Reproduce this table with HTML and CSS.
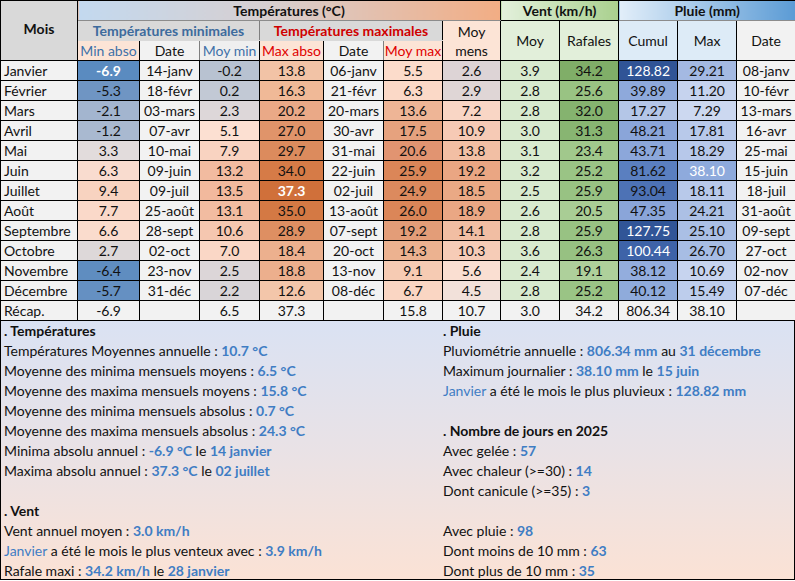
FILE: index.html
```html
<!DOCTYPE html>
<html lang="fr">
<head>
<meta charset="utf-8">
<title>Récapitulatif 2025</title>
<link rel="stylesheet" href="styles.css">
</head>
<body>
<div class="sheet">
<table class="grid">
<colgroup>
<col class="c-mois"><col class="c-minabs"><col class="c-d"><col class="c-moymin"><col class="c-maxabs"><col class="c-d"><col class="c-moymax"><col class="c-mens"><col class="c-v"><col class="c-v"><col class="c-v"><col class="c-v"><col class="c-v">
</colgroup>
<thead>
<tr>
<th rowspan="3" class="mois-h">Mois</th>
<th colspan="7" class="h-temp">Températures (°C)</th>
<th colspan="2" class="h-vent">Vent (km/h)</th>
<th colspan="3" class="h-pluie">Pluie (mm)</th>
</tr>
<tr>
<th colspan="3" class="h-min">Températures minimales</th>
<th colspan="3" class="h-max">Températures maximales</th>
<th rowspan="2" class="s-mens">Moy<br>mens</th>
<th rowspan="2" class="s-vent">Moy</th>
<th rowspan="2" class="s-vent">Rafales</th>
<th rowspan="2" class="s-pluie">Cumul</th>
<th rowspan="2" class="s-pluie">Max</th>
<th rowspan="2" class="s-date">Date</th>
</tr>
<tr>
<th class="s-min peach">Min abso</th>
<th class="s-date">Date</th>
<th class="s-min grey">Moy min</th>
<th class="s-max peach">Max abso</th>
<th class="s-date">Date</th>
<th class="s-max peach">Moy max</th>
</tr>
</thead>
<tbody>
<tr><td class="m">Janvier</td><td class="hi" style="background:#5a8bc0">-6.9</td><td class="d">14-janv</td><td style="background:#b8c2d1">-0.2</td><td style="background:#f2c3a6">13.8</td><td class="d">06-janv</td><td style="background:#fcdccb">5.5</td><td style="background:#ddd4d6">2.6</td><td style="background:#d8eacf">3.9</td><td style="background:#80ae68">34.2</td><td class="w" style="background:#305496">128.82</td><td style="background:#a4b9e2">29.21</td><td class="d">08-janv</td></tr>
<tr><td class="m">Février</td><td style="background:#6f95c3">-5.3</td><td class="d">18-févr</td><td style="background:#c2c9d5">0.2</td><td style="background:#f0b997">16.3</td><td class="d">21-févr</td><td style="background:#fbd9c7">6.3</td><td style="background:#dfd6d6">2.9</td><td style="background:#d8eacf">2.8</td><td style="background:#99c383">25.6</td><td style="background:#8ea9db">39.89</td><td style="background:#c6d3ee">11.20</td><td class="d">10-févr</td></tr>
<tr><td class="m">Mars</td><td style="background:#a3b5cf">-2.1</td><td class="d">03-mars</td><td style="background:#ddd7d9">2.3</td><td style="background:#eaa987">20.2</td><td class="d">20-mars</td><td style="background:#eeb596">13.6</td><td style="background:#f9d6c5">7.2</td><td style="background:#d8eacf">2.8</td><td style="background:#85b36f">32.0</td><td style="background:#b4c6e7">17.27</td><td style="background:#ccd8f0">7.29</td><td class="d">13-mars</td></tr>
<tr><td class="m">Avril</td><td style="background:#a9b9d0">-1.2</td><td class="d">07-avr</td><td style="background:#fce0d2">5.1</td><td style="background:#e0946a">27.0</td><td class="d">30-avr</td><td style="background:#e6a27e">17.5</td><td style="background:#f6cab5">10.9</td><td style="background:#d8eacf">3.0</td><td style="background:#88b572">31.3</td><td style="background:#8aa5d9">48.21</td><td style="background:#b8c9ea">17.81</td><td class="d">16-avr</td></tr>
<tr><td class="m">Mai</td><td style="background:#e2dcdc">3.3</td><td class="d">10-mai</td><td style="background:#f9d3c1">7.9</td><td style="background:#dc8b5d">29.7</td><td class="d">31-mai</td><td style="background:#e19471">20.6</td><td style="background:#f2bfa4">13.8</td><td style="background:#d8eacf">3.1</td><td style="background:#a1c88c">23.4</td><td style="background:#8ca7da">43.71</td><td style="background:#b7c8ea">18.29</td><td class="d">25-mai</td></tr>
<tr><td class="m">Juin</td><td style="background:#f9dccf">6.3</td><td class="d">09-juin</td><td style="background:#f2bba0">13.2</td><td style="background:#d67b47">34.0</td><td class="d">22-juin</td><td style="background:#db8658">25.9</td><td style="background:#eaa683">19.2</td><td style="background:#d8eacf">3.2</td><td style="background:#9ac485">25.2</td><td style="background:#5a7fc0">81.62</td><td class="w" style="background:#8eaadc">38.10</td><td class="d">15-juin</td></tr>
<tr><td class="m">Juillet</td><td style="background:#f8d3c0">9.4</td><td class="d">09-juil</td><td style="background:#f2b99d">13.5</td><td class="hi" style="background:#d0703a">37.3</td><td class="d">02-juil</td><td style="background:#dc8a5e">24.9</td><td style="background:#eaa985">18.5</td><td style="background:#d8eacf">2.5</td><td style="background:#98c283">25.9</td><td style="background:#4d72b5">93.04</td><td style="background:#b8c9ea">18.11</td><td class="d">18-juil</td></tr>
<tr><td class="m">Août</td><td style="background:#fad9c9">7.7</td><td class="d">25-août</td><td style="background:#f2bca1">13.1</td><td style="background:#d47944">35.0</td><td class="d">13-août</td><td style="background:#db8658">26.0</td><td style="background:#eaa784">18.9</td><td style="background:#d8eacf">2.6</td><td style="background:#a9cd95">20.5</td><td style="background:#8aa5d9">47.35</td><td style="background:#acc0e5">24.21</td><td class="d">31-août</td></tr>
<tr><td class="m">Septembre</td><td style="background:#fadccd">6.6</td><td class="d">28-sept</td><td style="background:#f5c7b0">10.6</td><td style="background:#de8f62">28.9</td><td class="d">07-sept</td><td style="background:#e39d78">19.2</td><td style="background:#f1bea3">14.1</td><td style="background:#d8eacf">2.8</td><td style="background:#98c283">25.9</td><td class="w" style="background:#315597">127.75</td><td style="background:#aabfe5">25.10</td><td class="d">09-sept</td></tr>
<tr><td class="m">Octobre</td><td style="background:#ddd8d9">2.7</td><td class="d">02-oct</td><td style="background:#fad7c6">7.0</td><td style="background:#ecb08e">18.4</td><td class="d">20-oct</td><td style="background:#ecb290">14.3</td><td style="background:#f6ccb7">10.3</td><td style="background:#d8eacf">3.6</td><td style="background:#97c182">26.3</td><td class="w" style="background:#3e63a8">100.44</td><td style="background:#a7bde4">26.70</td><td class="d">27-oct</td></tr>
<tr><td class="m">Novembre</td><td style="background:#5f8dc0">-6.4</td><td class="d">23-nov</td><td style="background:#dcd6d8">2.5</td><td style="background:#ecaf8d">18.8</td><td class="d">13-nov</td><td style="background:#f6cbb3">9.1</td><td style="background:#fadfd2">5.6</td><td style="background:#d8eacf">2.4</td><td style="background:#aed09b">19.1</td><td style="background:#93addd">38.12</td><td style="background:#c7d4ef">10.69</td><td class="d">02-nov</td></tr>
<tr><td class="m">Décembre</td><td style="background:#6590c2">-5.7</td><td class="d">31-déc</td><td style="background:#d9d5d8">2.2</td><td style="background:#f3c6aa">12.6</td><td class="d">08-déc</td><td style="background:#fad6c3">6.7</td><td style="background:#f2e1da">4.5</td><td style="background:#d8eacf">2.8</td><td style="background:#9ac485">25.2</td><td style="background:#8fabdb">40.12</td><td style="background:#bdcdec">15.49</td><td class="d">07-déc</td></tr>
<tr class="recap"><td class="m">Récap.</td><td>-6.9</td><td></td><td>6.5</td><td>37.3</td><td></td><td>15.8</td><td>10.7</td><td>3.0</td><td>34.2</td><td>806.34</td><td>38.10</td><td></td></tr>
</tbody>
</table>
<div class="summary">
<div class="col left">
<div class="line title">. Températures</div>
<div class="line">Températures Moyennes annuelle : <b>10.7 °C</b></div>
<div class="line">Moyenne des minima mensuels moyens : <b>6.5 °C</b></div>
<div class="line">Moyenne des maxima mensuels moyens : <b>15.8 °C</b></div>
<div class="line">Moyenne des minima mensuels absolus : <b>0.7 °C</b></div>
<div class="line">Moyenne des maxima mensuels absolus : <b>24.3 °C</b></div>
<div class="line">Minima absolu annuel : <b>-6.9 °C</b> le <b>14 janvier</b></div>
<div class="line">Maxima absolu annuel : <b>37.3 °C</b> le <b>02 juillet</b></div>
<div class="line"></div>
<div class="line title">. Vent</div>
<div class="line">Vent annuel moyen : <b>3.0 km/h</b></div>
<div class="line"><span class="hl">Janvier</span> a été le mois le plus venteux avec : <b>3.9 km/h</b></div>
<div class="line">Rafale maxi : <b>34.2 km/h</b> le <b>28 janvier</b></div>
</div>
<div class="col right">
<div class="line title">. Pluie</div>
<div class="line">Pluviométrie annuelle : <b>806.34 mm</b> au <b>31 décembre</b></div>
<div class="line">Maximum journalier : <b>38.10 mm</b> le <b>15 juin</b></div>
<div class="line"><span class="hl">Janvier</span> a été le mois le plus pluvieux : <b>128.82 mm</b></div>
<div class="line"></div>
<div class="line title">. Nombre de jours en 2025</div>
<div class="line">Avec gelée : <b>57</b></div>
<div class="line">Avec chaleur (&gt;=30) : <b>14</b></div>
<div class="line">Dont canicule (&gt;=35) : <b>3</b></div>
<div class="line"></div>
<div class="line">Avec pluie : <b>98</b></div>
<div class="line">Dont moins de 10 mm : <b>63</b></div>
<div class="line">Dont plus de 10 mm : <b>35</b></div>
</div>
</div>
</div>
</body>
</html>
```
FILE: styles.css
```css
html, body {
  margin: 0;
  padding: 0;
  background: #ffffff;
}

.sheet {
  width: 795px;
  font-family: Lato, "Noto Sans", "Liberation Sans", sans-serif;
  font-size: 14px;
  color: #111111;
}

.grid {
  width: 795px;
  border-collapse: collapse;
  table-layout: fixed;
}

.c-mois { width: 77px; }
.c-minabs { width: 62px; }
.c-d { width: 60px; }
.c-moymin { width: 60px; }
.c-maxabs { width: 64px; }
.c-moymax { width: 59px; }
.c-mens { width: 58px; }
.c-v { width: 59px; }

.grid th,
.grid td {
  border: 1px solid #000000;
  padding: 0;
  height: 19px;
  line-height: 18px;
  text-align: center;
  white-space: nowrap;
  overflow: hidden;
  font-weight: normal;
}

.grid th {
  line-height: 19px;
}

.mois-h {
  background: #d9d9d9;
  font-weight: bold !important;
  padding-bottom: 4px !important;
}

.h-temp {
  font-weight: bold !important;
  background: linear-gradient(to right, #c3d9ef, #d7cfd0 45%, #f2ad84);
  border-bottom-color: #8c8c8c !important;
}

.h-vent {
  font-weight: bold !important;
  background: linear-gradient(to right, #e3f0dc, #a9d08e);
}

.h-pluie {
  font-weight: bold !important;
  background: linear-gradient(to right, #e2eef9, #5b9bd5);
  border-bottom-color: #8c8c8c !important;
}

.h-min {
  background: #d9d9d9;
  color: #3d6b9d;
  font-weight: bold !important;
  border-top-color: #8c8c8c !important;
  border-bottom-color: #d9d9d9 !important;
  border-right-color: #7f7f7f !important;
}

.h-max {
  background: #d9d9d9;
  color: #d00000;
  font-weight: bold !important;
  border-top-color: #8c8c8c !important;
  border-bottom-color: #d9d9d9 !important;
}

.s-mens {
  background: #fce4d6;
  line-height: 19px !important;
  border-top-color: #8c8c8c !important;
}

.s-vent {
  background: #e2efda;
}

.s-pluie {
  background: #ddebf7;
  border-top-color: #8c8c8c !important;
}

.s-date {
  background: #f2f2f2;
  border-left-color: #7f7f7f !important;
  border-right-color: #7f7f7f !important;
}

.s-min {
  color: #3f71a8;
}

.s-max {
  color: #e00000;
}

.peach {
  background: #fce4d6;
}

.grey {
  background: #efefef;
}

.grid td.m {
  text-align: left;
  padding-left: 3px;
  background: #f2f2f2;
}

.grid td.d {
  background: #f2f2f2;
}

.grid td.hi {
  color: #ffffff;
  font-weight: bold;
}

.grid td.w {
  color: #ffffff;
}

.recap td {
  background: #f2f2f2;
}

.summary {
  display: grid;
  grid-template-columns: 440px 1fr;
  height: 259px;
  border: 1px solid #000000;
  border-top: none;
  background: linear-gradient(to bottom, #dae2f3, #e9e2e6 50%, #fbe2d5);
  box-sizing: border-box;
}

.col.left {
  padding-left: 3px;
}

.col.right {
  padding-left: 2px;
}

.line {
  height: 20px;
  line-height: 20px;
  white-space: nowrap;
}

.line.title {
  font-weight: bold;
}

.line b {
  color: #3f7dc4;
}

.hl {
  color: #3f7dc4;
}
```
